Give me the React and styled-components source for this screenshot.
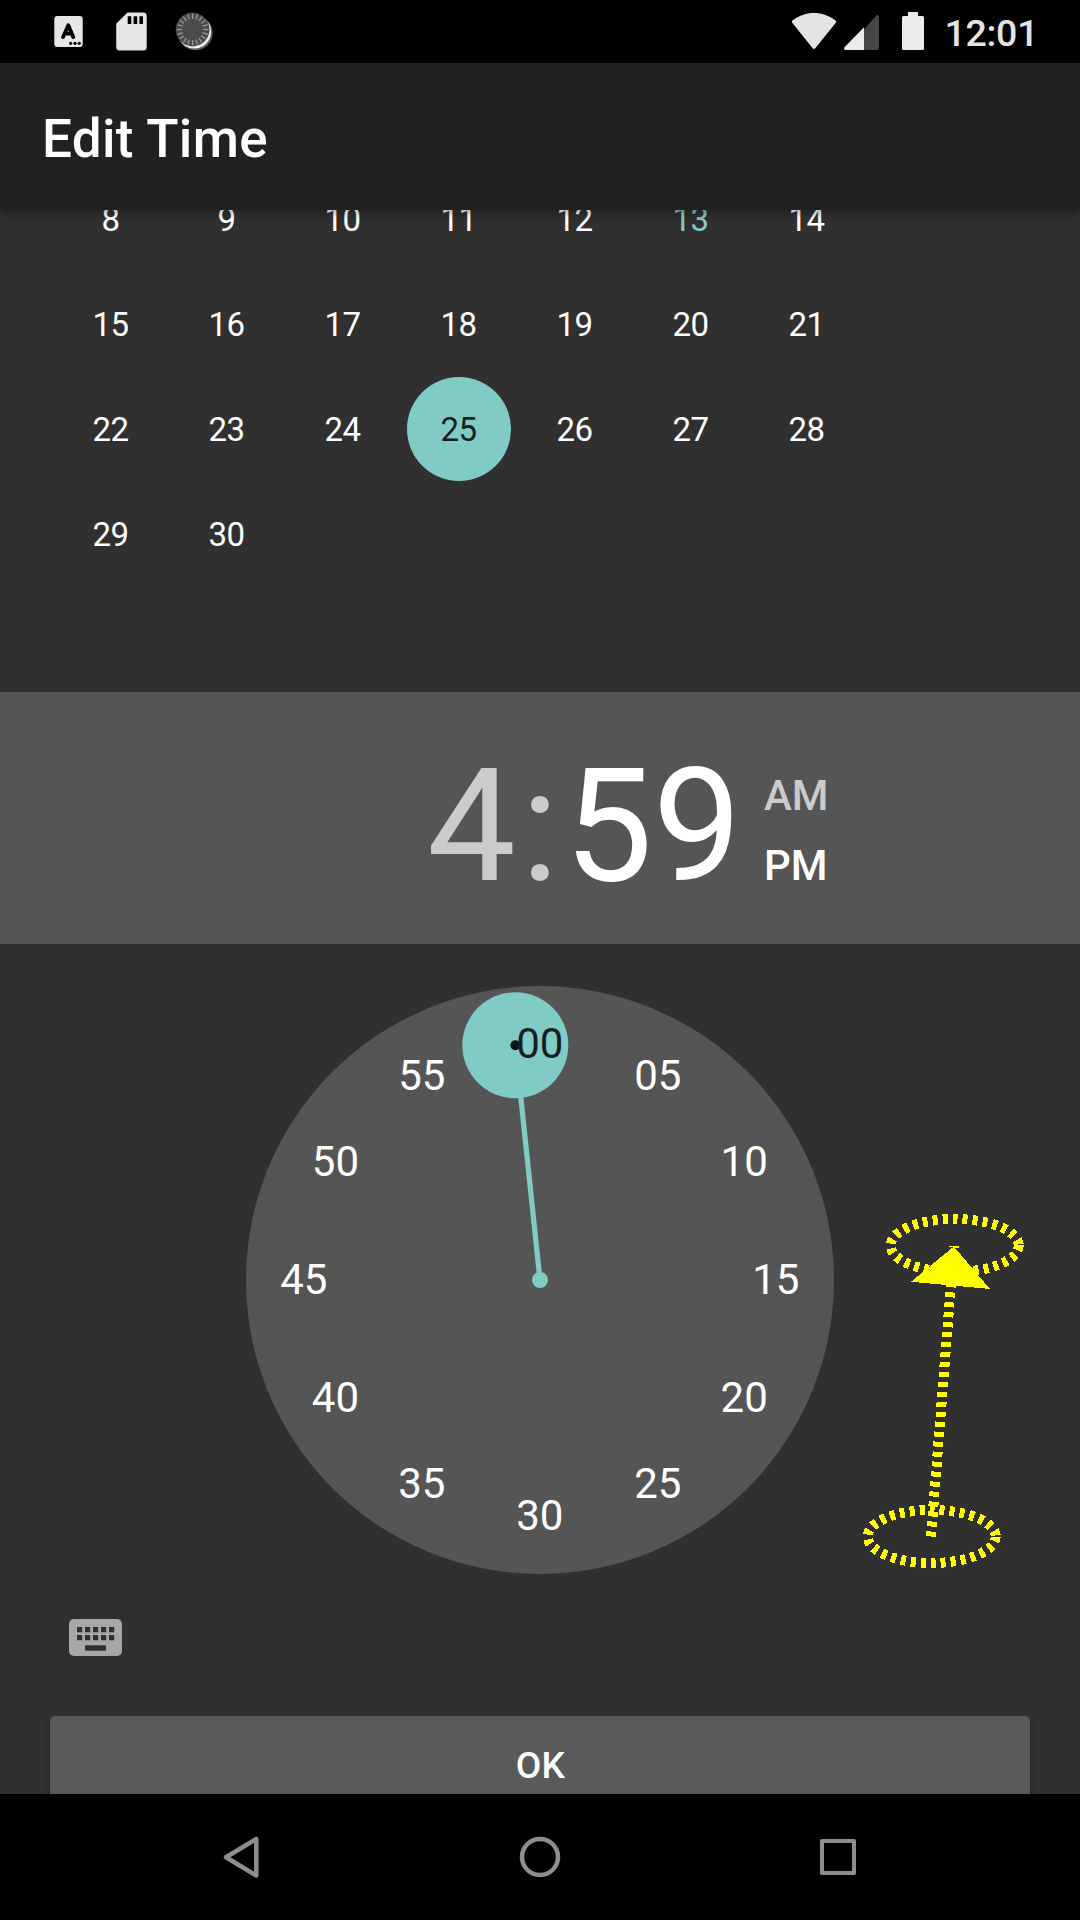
import React from "react";
import styled, { createGlobalStyle } from "styled-components";

const ACCENT = "#80cbc4";

const GlobalStyle = createGlobalStyle`
  html, body { margin: 0; padding: 0; background: #000; }
  * { box-sizing: border-box; }
`;

const Screen = styled.div`
  position: relative;
  display: flex;
  flex-direction: column;
  width: 1080px;
  height: 1920px;
  overflow: hidden;
  background: #303030;
  color: #fff;
  font-family: Roboto, "Noto Sans", sans-serif;
`;

const StatusBar = styled.header`
  display: flex;
  justify-content: space-between;
  flex: 0 0 63px;
  background: #000;
`;

const StatusGroup = styled.div`
  display: flex;
  height: 63px;
`;

const StatusTime = styled.span`
  width: 140px;
  padding-left: 4.5px;
  font-size: 37.5px;
  font-weight: 500;
  line-height: 66px;
  letter-spacing: -0.3px;
  color: #e4e4e4;
`;

const AppBar = styled.div`
  position: relative;
  z-index: 1;
  display: flex;
  align-items: center;
  flex: 0 0 147px;
  padding: 4px 42px 0;
  background: #212121;
  box-shadow: 0 3px 9px rgba(0, 0, 0, 0.35);
`;

const Title = styled.h1`
  margin: 0;
  font-size: 53px;
  font-weight: 500;
  line-height: 62px;
  letter-spacing: 0.35px;
`;

const Calendar = styled.section`
  flex: 0 0 482px;
  overflow: hidden;
`;

const Days = styled.div`
  display: grid;
  grid-template-columns: repeat(7, 116px);
  grid-auto-rows: 105px;
  margin-top: -44px;
  padding-left: 53px;
`;

const Day = styled.div`
  display: flex;
  align-items: center;
  justify-content: center;
  justify-self: center;
  align-self: center;
  width: 104px;
  height: 104px;
  padding: 1px 1px 0 0;
  border-radius: 50%;
  font-size: 33px;
  letter-spacing: -0.5px;
  background: ${(p) => (p.$selected ? ACCENT : "transparent")};
  color: ${(p) => (p.$selected ? "#131f1e" : p.$today ? ACCENT : "#fff")};
`;

const TimeHeader = styled.section`
  display: flex;
  flex: 0 0 252px;
  min-height: 0;
  height: 252px;
  padding-left: 427px;
  background: #555;
`;

const TimePart = styled.span`
  width: ${(p) => p.$width}px;
  font-size: 158px;
  line-height: 269px;
  text-align: ${(p) => p.$align || "left"};
  white-space: nowrap;
  color: ${(p) => (p.$active ? "#fff" : "#cbcbcb")};
`;

const Meridiem = styled.div`
  display: flex;
  flex-direction: column;
  padding: 69px 0 0 23px;
`;

const MeridiemOption = styled.span`
  height: 70px;
  font-size: 42px;
  font-weight: 500;
  line-height: 70px;
  color: ${(p) => (p.$active ? "#fff" : "#cbcbcb")};
`;

const ClockPanel = styled.section`
  display: flex;
  flex-direction: column;
  align-items: center;
  flex: 0 0 850px;
  min-height: 0;
  padding-top: 42px;
  overflow: hidden;
`;

const Dial = styled.div`
  position: relative;
  flex: 0 0 588px;
  width: 588px;
  border-radius: 50%;
  background: #555;
`;

const HandDrawing = styled.svg`
  display: block;
`;

const Minute = styled.span`
  position: absolute;
  width: 80px;
  margin: -30px 0 0 -40.2px;
  line-height: 60px;
  text-align: center;
  font-size: 42px;
  color: ${(p) => (p.$selected ? "#131f1e" : "#fff")};
`;

const InputMode = styled.div`
  align-self: flex-start;
  flex: 0 0 37px;
  margin: 45px 0 60px 69px;
`;

const OkButton = styled.button`
  flex: 0 0 100px;
  width: 980px;
  padding: 0 0 0 1px;
  border: 0;
  border-radius: 5px;
  background: #5a5a5b;
  box-shadow: 0 4px 6px rgba(0, 0, 0, 0.3);
  color: #fff;
  font: 500 37px/100px Roboto, "Noto Sans", sans-serif;
  letter-spacing: 0.3px;
`;

const NavBar = styled.nav`
  position: relative;
  display: flex;
  flex: 0 0 126px;
  background: #000;
`;

const NavIcons = styled.svg`
  display: block;
`;

const Gesture = styled.svg`
  position: absolute;
  left: 840px;
  top: 1190px;
`;

const days = Array.from({ length: 23 }, (_, i) => i + 8);
const minutes = Array.from({ length: 12 }, (_, i) => i * 5);

function NotificationIcons() {
  const ticks = Array.from({ length: 20 }, (_, i) => i * 18);
  return (
    <svg width="240" height="63" viewBox="0 0 240 63">
      <rect x="54.3" y="16" width="28.4" height="31" rx="3" fill="#e6e6e6" />
      <path d="M63.1 37 68.3 25.2 73.2 37M65 33.7h6.5" fill="none" stroke="#000" strokeWidth="3.8" strokeLinecap="round" strokeLinejoin="round" />
      <circle cx="70.6" cy="43.3" r="1.6" />
      <circle cx="75" cy="43.3" r="1.6" />
      <circle cx="79.2" cy="43.3" r="1.6" />
      <path d="M127.5 12.5h15.7a3.5 3.5 0 0 1 3.5 3.5v31a3.5 3.5 0 0 1-3.5 3.5h-23.5a3.5 3.5 0 0 1-3.5-3.5V23.8z" fill="#e6e6e6" />
      <path d="M127.7 16.3h3.6V24h-3.6zM133.6 16.3h3.6V24h-3.6zM139.4 16.3h3.6V24h-3.6z" />
      <circle cx="195.5" cy="33" r="17.3" fill="#5a5a5a" />
      <circle cx="194.3" cy="31.8" r="16.8" fill="#eee" />
      <circle cx="192.6" cy="29.5" r="16.9" fill="#4b4b4b" />
      {ticks.map((a) => (
        <path key={a} d="M192.6 13.7v5.2" stroke="#999" strokeWidth="1.3" transform={`rotate(${a} 192.6 29.5)`} />
      ))}
    </svg>
  );
}

function SystemIcons() {
  return (
    <svg width="150" height="63" viewBox="790 0 150 63">
      <path d="M792.2 22.8a1.5 1.5 0 0 1 .2-2.2C799 15.6 806 13 814 13s15 2.6 21.6 7.6a1.5 1.5 0 0 1 .2 2.2L815.3 48.2a1.7 1.7 0 0 1-2.6 0z" fill="#e4e4e4" />
      <path d="M864 29.5 876 16c1.3-1.6 3-1 3 1v31a2 2 0 0 1-2 2h-13z" fill="#464646" />
      <path d="M864 27.2V50h-18c-2 0-2.6-1.6-1.3-3z" fill="#ebebeb" />
      <path d="M908 12h10v4h4.5a1.5 1.5 0 0 1 1.5 1.5v31a1.5 1.5 0 0 1-1.5 1.5h-19a1.5 1.5 0 0 1-1.5-1.5v-31a1.5 1.5 0 0 1 1.5-1.5h4.5z" fill="#ebebeb" />
    </svg>
  );
}

function KeyboardIcon() {
  const columns = [8, 16, 24, 32, 40];
  return (
    <svg width="53" height="37" viewBox="0 0 53 37" display="block">
      <rect width="53" height="37" rx="5" fill="#a7a7a7" />
      {columns.map((x) => (
        <path key={x} d={`M${x} 8h5.2v5.2h-5.2zM${x} 16h5.2v5.2h-5.2z`} fill="#303030" />
      ))}
      <rect x="16" y="26.3" width="21" height="5.4" fill="#303030" />
    </svg>
  );
}

function MinuteDial({ hand }) {
  const c = 294;
  const rad = (hand * 6 * Math.PI) / 180;
  const x = c + 236 * Math.sin(rad);
  const y = c - 236 * Math.cos(rad);
  return (
    <Dial>
      <HandDrawing width="588" height="588" viewBox="0 0 588 588">
        <line x1={c} y1={c} x2={x} y2={y} stroke={ACCENT} strokeWidth="5.25" />
        <circle cx={c} cy={c} r="8" fill={ACCENT} />
        <circle cx={x} cy={y} r="53" fill={ACCENT} />
        <circle cx={x} cy={y} r="5" fill="#0d1514" />
      </HandDrawing>
      {minutes.map((m) => {
        const a = (m * 6 * Math.PI) / 180;
        return (
          <Minute
            key={m}
            $selected={m === 0}
            style={{ left: c + 236 * Math.sin(a), top: c - 236 * Math.cos(a) }}
          >
            {String(m).padStart(2, "0")}
          </Minute>
        );
      })}
    </Dial>
  );
}

export default function App() {
  return (
    <>
      <GlobalStyle />
      <Screen>
        <StatusBar>
          <StatusGroup>
            <NotificationIcons />
          </StatusGroup>
          <StatusGroup>
            <SystemIcons />
            <StatusTime>12:01</StatusTime>
          </StatusGroup>
        </StatusBar>
        <AppBar>
          <Title>Edit Time</Title>
        </AppBar>
        <Calendar>
          <Days>
            {days.map((d) => (
              <Day key={d} $selected={d === 25} $today={d === 13}>
                {d}
              </Day>
            ))}
          </Days>
        </Calendar>
        <TimeHeader>
          <TimePart $width={89}>4</TimePart>
          <TimePart $width={48} $align="center">:</TimePart>
          <TimePart $width={177} $active>59</TimePart>
          <Meridiem>
            <MeridiemOption>AM</MeridiemOption>
            <MeridiemOption $active>PM</MeridiemOption>
          </Meridiem>
        </TimeHeader>
        <ClockPanel>
          <MinuteDial hand={59} />
          <InputMode>
            <KeyboardIcon />
          </InputMode>
          <OkButton>OK</OkButton>
        </ClockPanel>
        <NavBar>
          <NavIcons width="1080" height="126" viewBox="0 1794 1080 126" fill="none" stroke="#8e8e8e" strokeWidth="4.5" strokeLinejoin="round">
            <path d="M226 1857.3 256.3 1839v36.5z" />
            <circle cx="540" cy="1857" r="18" />
            <rect x="822" y="1841" width="32" height="32" strokeWidth="4" />
          </NavIcons>
        </NavBar>
        <Gesture width="220" height="400" viewBox="840 1190 220 400" fill="none" stroke="#ff0" strokeWidth="10" strokeDasharray="5 5" shapeRendering="crispEdges">
          <ellipse cx="931.7" cy="1536.5" rx="64" ry="26.5" />
          <ellipse cx="954.7" cy="1245.5" rx="64" ry="26.5" />
          <line x1="931" y1="1536.5" x2="954" y2="1246" />
          <path d="M953.8 1246.5 911 1281.8 990 1289z" fill="#ff0" stroke="none" />
        </Gesture>
      </Screen>
    </>
  );
}
